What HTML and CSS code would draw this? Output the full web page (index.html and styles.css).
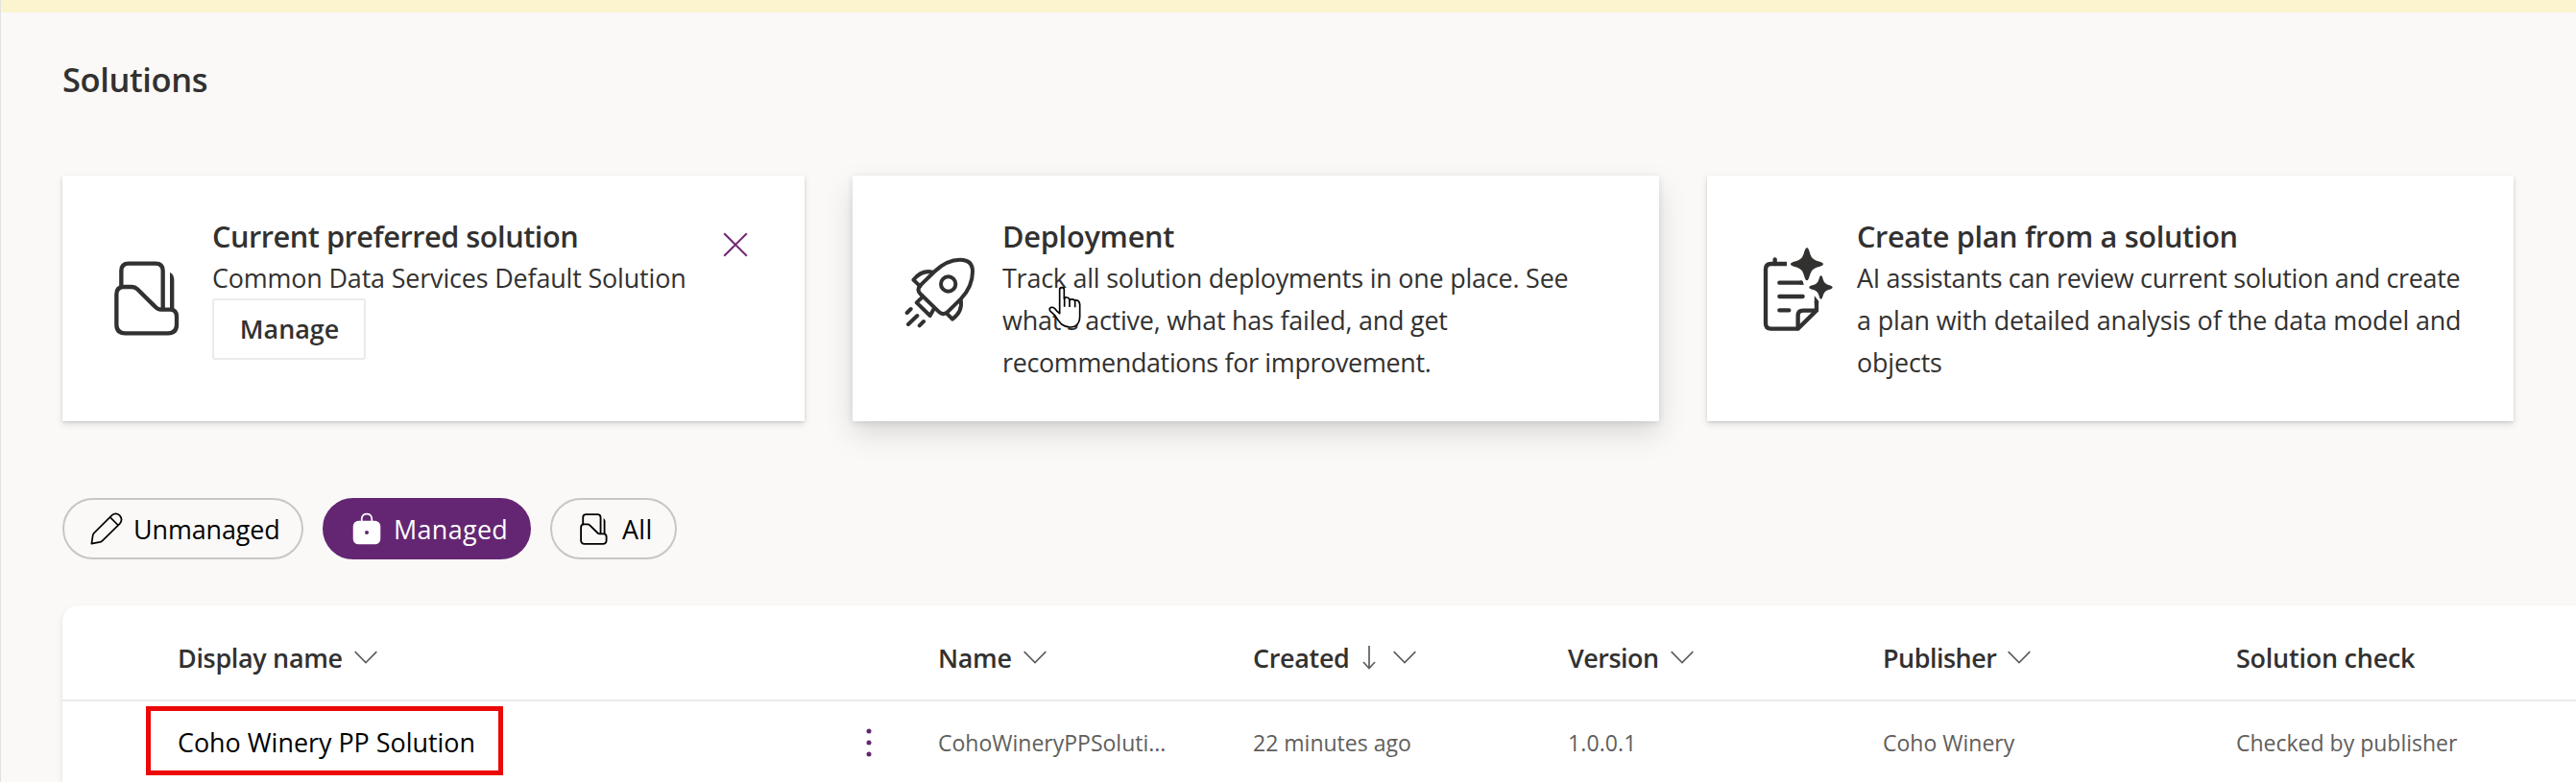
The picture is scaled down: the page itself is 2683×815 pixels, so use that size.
FILE: index.html
```
<!DOCTYPE html>
<html lang="en">
<head>
<meta charset="utf-8">
<title>Solutions</title>
<link rel="stylesheet" href="styles.css">
</head>
<body>
<svg class="sprite" aria-hidden="true">
  <symbol id="i-solution" viewBox="88 96 204 234">
    <g fill="none" stroke="currentColor" stroke-width="13" stroke-linejoin="round">
      <path d="M95 200Q95 177 118 177H143Q153 177 160 184L215 238Q224 248 234 248H262Q283 248 283 270V295Q283 322 256 322H122Q95 322 95 295Z"/>
      <path d="M110 178V127Q110 104 133 104H217Q240 104 240 127V248"/>
    </g>
    <path fill="currentColor" d="M262 131Q275 139 275 155V250H262Z"/>
  </symbol>
  <symbol id="i-chevron" viewBox="0 0 24 14">
    <path d="M.7 1.2L12 12.5L23.3 1.2" fill="none" stroke="currentColor" stroke-width="1.7"/>
  </symbol>
</svg>
<div class="app">
  <div class="notice"></div>
  <main class="page">
    <h1 class="page-title">Solutions</h1>

    <section class="cards">
      <article class="card card-preferred">
        <svg class="card-icon icon-solution"><use href="#i-solution"/></svg>
        <div class="card-body">
          <h2 class="card-title t-preferred">Current preferred solution</h2>
          <p class="card-text t-common">Common Data Services Default Solution</p>
          <button class="manage">Manage</button>
        </div>
        <svg class="close" viewBox="0 0 26 26"><path d="M1.2 1.2L24.8 24.8M24.8 1.2L1.2 24.8" fill="none" stroke="currentColor" stroke-width="2"/></svg>
      </article>

      <article class="card card-deploy">
        <svg class="card-icon icon-rocket" viewBox="64 54 222 222">
          <g fill="none" stroke="currentColor" stroke-width="12" stroke-linejoin="round" stroke-linecap="round">
            <path d="M113 143L158 99Q196 62 238 62Q277 62 277 99Q277 146 240 185L198 226Q185 237 173 226L113 168Q102 156 113 143Z"/>
            <circle cx="201" cy="138" r="23"/>
            <path d="M113 145L92 125Q118 93 152 101"/>
            <path d="M240 188Q247 223 214 248L196 230"/>
            <path d="M121 178L102 196L144 237L157 214"/>
            <path d="M84 216L72 228M104 237L76 264M124 255L111 268"/>
          </g>
        </svg>
        <div class="card-body">
          <h2 class="card-title t-deploy">Deployment</h2>
          <p class="card-text"><span class="t-track">Track all solution deployments in one place. See</span><br><span class="t-active">what's active, what has failed, and get</span><br><span class="t-recommend">recommendations for improvement.</span></p>
        </div>
        <svg class="cursor" viewBox="514 144 102 134">
          <path d="M549 224V156Q549 149 556 149Q563 149 563 156V184Q565 179 571 180Q579 181 580 188Q588 183 596 189Q611 187 612 202V240Q612 261 597 270Q575 278 555 264Q542 250 534 236L519 222Q515 213 523 211Q531 209 540 222L549 230Z" fill="#fff" stroke="#000" stroke-width="5" stroke-linejoin="round"/>
          <path d="M564 182V209M580 186V210M597 189V211" stroke="#000" stroke-width="5"/>
        </svg>
      </article>

      <article class="card card-plan">
        <svg class="card-icon icon-plan" viewBox="80 55 220 262">
          <g fill="none" stroke="currentColor" stroke-width="13">
            <path d="M155 106H106Q89 106 89 123V292Q89 309 106 309H190L248 252V222"/>
            <path d="M118 106V92M132 165H200M132 208H205M132 251H162" stroke-linecap="round"/>
            <path d="M190 308V268Q190 252 206 252H248"/>
          </g>
          <path fill="currentColor" d="M241.500 206L254.500 222V230H241.500ZM196 158.500H203L209 171H196Z"/>
          <path fill="currentColor" d="M218 56C226 56 226 80 236 89C245 99 269 99 269 107C269 115 245 115 236 125C226 134 226 158 218 158C210 158 210 134 200 125C191 115 167 115 167 107C167 99 191 99 200 89C210 80 210 56 218 56Z"/>
          <path fill="currentColor" d="M262 143C268 143 267 159 275 166C282 173 298 173 298 179.500C298 186 282 186 275 193C267 200 268 216 262 216C256 216 257 200 249 193C242 186 225 186 225 179.500C225 173 242 173 249 166C257 159 256 143 262 143Z"/>
        </svg>
        <div class="card-body">
          <h2 class="card-title t-plan">Create plan from a solution</h2>
          <p class="card-text"><span class="t-assist">AI assistants can review current solution and create</span><br><span class="t-detail">a plan with detailed analysis of the data model and</span><br><span class="t-objects">objects</span></p>
        </div>
      </article>
    </section>

    <nav class="pills">
      <button class="pill pill-unmanaged">
        <svg class="pencil" viewBox="103 67 100 100"><g fill="none" stroke="currentColor" stroke-width="5" stroke-linejoin="round"><path d="M107 163L111 137Q112 133 115 130L169 76Q181 66 193 76Q204 88 194 101L140 154Q137 157 133 158Z"/><path d="M164 82L188 106"/></g></svg>
        <span class="pill-label">Unmanaged</span>
      </button>
      <button class="pill pill-managed">
        <svg class="lock" viewBox="922 67 88 100"><path d="M950.500 96V86Q952 71.500 966 71.500Q980 71.500 981.500 86V96" fill="none" stroke="currentColor" stroke-width="5"/><rect x="924" y="93" width="84" height="72" rx="17" fill="currentColor"/><circle class="keyhole" cx="966" cy="129" r="6"/></svg>
        <span class="pill-label">Managed</span>
      </button>
      <button class="pill pill-all">
        <svg class="stack"><use href="#i-solution"/></svg>
        <span class="pill-label">All</span>
      </button>
    </nav>

    <section class="table">
      <div class="row head">
        <div class="cell"><span class="t-display">Display name</span><svg class="chev"><use href="#i-chevron"/></svg></div>
        <div class="cell"></div>
        <div class="cell"><span class="t-name">Name</span><svg class="chev"><use href="#i-chevron"/></svg></div>
        <div class="cell"><span class="t-created">Created</span><svg class="sort" viewBox="0 0 14 25"><path d="M7 0V23M1 17L7 23.500L13 17" fill="none" stroke="currentColor" stroke-width="1.700"/></svg><svg class="chev"><use href="#i-chevron"/></svg></div>
        <div class="cell"><span class="t-version">Version</span><svg class="chev"><use href="#i-chevron"/></svg></div>
        <div class="cell"><span class="t-publisher">Publisher</span><svg class="chev"><use href="#i-chevron"/></svg></div>
        <div class="cell"><span class="t-check">Solution check</span></div>
      </div>
      <div class="row item">
        <div class="cell primary"><span class="highlight">Coho Winery PP Solution</span></div>
        <div class="cell"><svg class="dots" viewBox="0 0 6 30"><circle cx="3" cy="3" r="2.500"/><circle cx="3" cy="15" r="2.500"/><circle cx="3" cy="27" r="2.500"/></svg></div>
        <div class="cell">CohoWineryPPSoluti...</div>
        <div class="cell">22 minutes ago</div>
        <div class="cell t-number">1.0.0.1</div>
        <div class="cell">Coho Winery</div>
        <div class="cell">Checked by publisher</div>
      </div>
    </section>
  </main>
</div>
</body>
</html>
```
FILE: styles.css
```
* { box-sizing: border-box; }
html, body { margin: 0; overflow: hidden; }
body {
  background: #faf9f8;
  color: #323130;
  font-family: "Open Sans", "Noto Sans", sans-serif;
}
h1, h2, p { margin: 0; }
button { font: inherit; color: inherit; margin: 0; }
svg { display: block; flex: none; }
.sprite { width: 0; height: 0; position: absolute; }

.app { height: 815px; border-left: 1px solid #e1e1e1; overflow: hidden; }
.notice { height: 13px; background: #fcf3cf; }
.page { padding: 46px 0 0 64px; }
.page-title {
  font-size: 34.5px; line-height: 48px; font-weight: 600; letter-spacing: -.37px;
}

.cards { display: flex; gap: 50px; margin-top: 76px; }
.card {
  position: relative;
  display: flex;
  height: 256px;
  background: #fff;
  box-shadow: 0 3px 7px rgba(0,0,0,.13), 0 1px 2px rgba(0,0,0,.11);
}
.card-preferred { width: 773px; padding: 41px 59px 0 54px; }
.card-deploy {
  width: 840px; padding: 41px 0 0 54px;
  box-shadow: 0 13px 29px rgba(0,0,0,.13), 0 2px 7px rgba(0,0,0,.11);
}
.card-plan { width: 840px; padding: 41px 0 0 58px; }
.card-body { flex: 1; white-space: nowrap; }
.card-title { font-size: 30.7px; line-height: 44px; font-weight: 600; }
.card-text { font-size: 26.9px; line-height: 44px; }
.icon-solution { width: 68px; height: 78px; margin: 48px 34px 0 0; }
.icon-rocket { width: 74px; height: 74px; margin: 44px 28px 0 0; }
.icon-plan { width: 73.300px; height: 87.300px; margin: 34.300px 24.700px 0 0; }
.manage {
  display: block;
  width: 160px; height: 64px; margin-top: -1px; padding: 0 0 0 1px;
  background: #fff; border: 2px solid #edebe9; border-radius: 3px;
  font-size: 26.9px; font-weight: 600; line-height: 60px;
}
.close { width: 26px; height: 26px; color: #742774; margin-top: 18px; }
.cursor { position: absolute; left: 203.500px; top: 115px; width: 34px; height: 44.700px; }

.pills { display: flex; gap: 20px; margin-top: 80px; }
.pill {
  display: flex; align-items: center;
  height: 64px; padding: 0 0 0 29px;
  border: 2px solid #c8c6c4; border-radius: 32px;
  background: transparent; color: #000;
  font-size: 26.9px; line-height: 38px;
}
.pill-label { padding-top: 2px; }
.pill-unmanaged { width: 251px; padding-left: 27px; gap: 11px; letter-spacing: -.1px; }
.pill-managed { width: 217px; gap: 13px; background: #642672; border-color: #642672; color: #fff; letter-spacing: .35px; }
.pill-all { width: 132px; gap: 15px; letter-spacing: .3px; }
.pencil { width: 34px; height: 34px; }
.lock { width: 30px; height: 34px; }
.keyhole { fill: #642672; }
.stack { width: 29px; height: 33px; }

.table {
  height: 200px; margin-top: 48px;
  background: #fff; border-radius: 16px 0 0 0;
  box-shadow: 0 3px 7px rgba(0,0,0,.09), 0 1px 2px rgba(0,0,0,.06);
}
.row {
  display: grid;
  grid-template-columns: 717px 75px 328px 328px 328px 368px 1fr;
  padding-left: 120px;
  white-space: nowrap;
}
.cell { display: flex; align-items: center; }
.head { height: 100px; padding-top: 11px; border-bottom: 2px solid #edebe9; font-size: 26.9px; font-weight: 600; }
.item { height: 86px; color: #605e5c; font-size: 23px; }
.item .cell { height: 86px; }
.item .primary { color: #000; font-size: 26.9px; }
.chev { width: 24px; height: 14px; margin: 0 0 2px 12px; color: #605e5c; }
.sort { width: 14px; height: 25px; margin: 0 6px 0 13px; color: #605e5c; }
.highlight {
  height: 72px; line-height: 66px; margin: 0 0 4px -33px; padding: 0 24px 0 28px;
  border: 5px solid #ec0808;
}
.dots { width: 6px; height: 30px; fill: #642672; }

/* Tracking per label */
.t-preferred { letter-spacing: -.47px; }
.t-common { letter-spacing: -.15px; }
.t-deploy { letter-spacing: -.23px; }
.t-track, .t-active { letter-spacing: -.2px; }
.t-recommend { letter-spacing: -.33px; }
.t-assist { letter-spacing: -.3px; }
.t-plan { letter-spacing: -.33px; }
.t-detail { letter-spacing: -.13px; }
.t-objects { letter-spacing: -.15px; }
.t-display, .t-name, .t-created { letter-spacing: -.3px; }
.t-version, .t-publisher { letter-spacing: -.47px; }
.t-check { letter-spacing: -.2px; }
.t-number { letter-spacing: .1px; }
```
